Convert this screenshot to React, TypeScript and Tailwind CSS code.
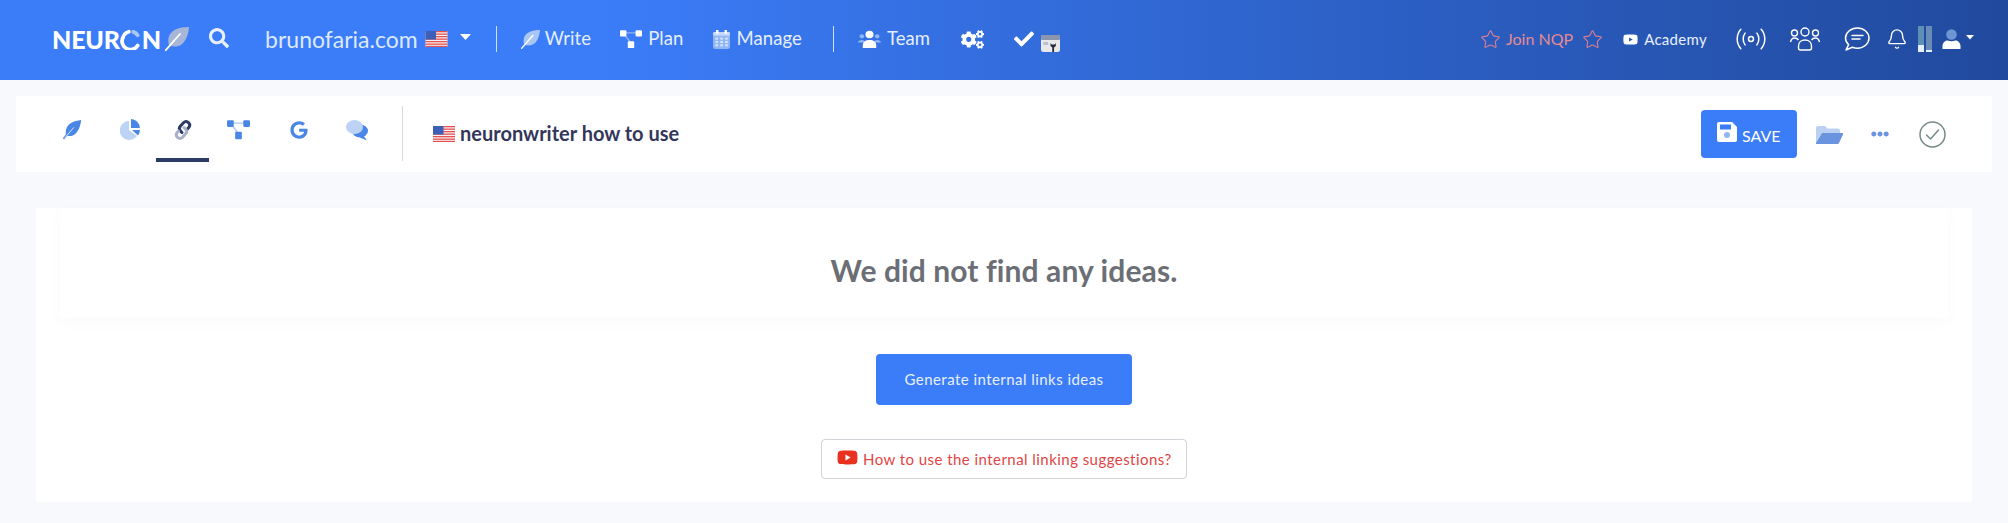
import React from "react";
import { FaSearch, FaCogs, FaCheck, FaYoutube } from "react-icons/fa";
import { FaGoogle, FaEllipsisH } from "react-icons/fa";
import { Bell, Star } from "lucide-react";

const Flag = ({ w = 22, h = 16 }: { w?: number; h?: number }) => (
  <svg width={w} height={h} viewBox="0 0 22 16" className="shrink-0">
    <rect width="22" height="16" fill="#f4f4f6" />
    {[0, 2.5, 5, 7.5, 10, 12.5, 14.8].map((y) => (
      <rect key={y} y={y} width="22" height="1.3" fill="#e8534f" />
    ))}
    <rect width="10.5" height="8.5" fill="#3e5fb8" />
  </svg>
);

const Feather = ({ size = 20, light = "#a9c6f6", quill = "#ffffff" }: { size?: number; light?: string; quill?: string }) => (
  <svg width={size} height={size} viewBox="0 0 24 24" className="shrink-0">
    <path d="M24 0C14 0 5 3 3.500 11c-.5 2.800-.2 5.400.6 7.400C8 20 13 20 16.500 17.500 21 14 23.500 7 24 0Z" fill={light} />
    <path d="M0.800 23.200 15 7" stroke={quill} strokeWidth="1.8" strokeLinecap="round" fill="none" />
  </svg>
);

const PlanIcon = ({ a, b, w = 22 }: { a: string; b: string; w?: number }) => (
  <svg width={w} height={w * 0.85} viewBox="0 0 24 20" className="shrink-0">
    <path d="M6 3h12M5 5l7 9" stroke={b} strokeWidth="1.4" fill="none" />
    <rect x="0" y="0" width="7" height="7" rx="1.2" fill={a} />
    <rect x="17" y="0" width="7" height="7" rx="1.2" fill={a} />
    <rect x="8.5" y="12" width="7" height="8" rx="1.2" fill={a} />
  </svg>
);

const Calendar = () => (
  <svg width="17" height="19" viewBox="0 0 14 20" preserveAspectRatio="none" className="shrink-0">
    <rect x="0" y="2" width="14" height="18" rx="2" fill="#8fb6f5" />
    <rect x="0" y="2" width="14" height="4" rx="1" fill="#c4d8fa" />
    <rect x="2.5" y="0" width="2" height="4" fill="#ffffff" />
    <rect x="9.5" y="0" width="2" height="4" fill="#ffffff" />
    {[8, 11.5, 15].map((y) => [2, 6, 10].map((x) => <rect key={`${x}-${y}`} x={x} y={y} width="2.2" height="2.2" fill="#d4e3fb" />))}
  </svg>
);

const TeamIcon = () => (
  <svg width="23" height="18" viewBox="0 0 24 20" preserveAspectRatio="none" className="shrink-0">
    <circle cx="4" cy="7" r="2.4" fill="#8fb6f5" />
    <circle cx="20" cy="7" r="2.4" fill="#8fb6f5" />
    <path d="M0 14c0-2 2-3 4-3s3 1 3 3ZM17 14c0-2 1-3 3-3s4 1 4 3Z" fill="#8fb6f5" />
    <circle cx="12" cy="5" r="4.2" fill="#fff" />
    <path d="M5 20v-3c0-4 3-6 7-6s7 2 7 6v3Z" fill="#fff" />
  </svg>
);

const Tool = () => (
  <svg width="19" height="18" viewBox="0 0 16 18" preserveAspectRatio="none" className="shrink-0">
    <rect x="0" y="1" width="16" height="17" rx="2" fill="#e8e8ea" />
    <rect x="0" y="1" width="16" height="5" rx="1" fill="#8a96ae" />
    <rect x="2" y="8" width="4" height="3" fill="#b9c0cc" />
    <path d="M8 9v3l1.5 1.5V18h1.5v-4.5L12.500 12V9l-1 1.500h-2.500Z" fill="#262c3c" />
  </svg>
);

const Broadcast = () => (
  <svg width="30" height="22" viewBox="0 0 28 20" fill="none" stroke="#fff" strokeWidth="1.4" strokeLinecap="round" className="shrink-0">
    <circle cx="14" cy="10" r="2.300" />
    <path d="M8.500 4.500c-2.400 3-2.400 8 0 11M19.500 4.500c2.400 3 2.400 8 0 11M4.500 1c-4.500 5-4.500 13 0 18M23.500 1c4.500 5 4.500 13 0 18" />
  </svg>
);

const People = () => (
  <svg width="32" height="24" viewBox="0 0 31 24" fill="none" stroke="#fff" strokeWidth="1.4" className="shrink-0">
    <circle cx="15.500" cy="5" r="4" />
    <circle cx="5" cy="6" r="3" />
    <circle cx="26" cy="6" r="3" />
    <path d="M9 21v-2c0-4 3-6 6.500-6s6.500 2 6.500 6v2a2 2 0 0 1-2 2H11a2 2 0 0 1-2-2Z" />
    <path d="M1 15c.6-2.500 2.500-4 4-4s3 .5 4 2M30 15c-.6-2.500-2.500-4-4-4s-3 .5-4 2" />
  </svg>
);

const ChatLines = () => (
  <svg width="26" height="24" viewBox="0 0 26 24" fill="none" stroke="#fff" strokeWidth="1.5" strokeLinecap="round" strokeLinejoin="round" className="shrink-0">
    <path d="M13.500 1C6.800 1 1.500 5.600 1.500 11c0 2.600 1.200 4.900 3.100 6.600L2 23l6.300-2.700c1.600.6 3.400.9 5.200.9 6.300 0 11.500-4.500 11.500-10.100S19.800 1 13.500 1Z" />
    <path d="M8 8.500h11M8 12h8" />
  </svg>
);

const UserIcon = () => (
  <svg width="19" height="20" viewBox="0 0 18 20" className="shrink-0">
    <circle cx="9" cy="5.500" r="5.300" fill="#6f94d6" />
    <path d="M0 20v-3c0-3.500 3-5.500 5-5.500 2.500 1 5.500 1 8 0 2 0 5 2 5 5.500v3Z" fill="#fff" />
  </svg>
);

const Caret = ({ w = 10 }: { w?: number }) => (
  <svg width={w} height={w * 0.55} viewBox="0 0 10 5.500" className="shrink-0">
    <path d="M0 0h10L5 5.500Z" fill="#fff" />
  </svg>
);

const Pie = () => (
  <svg width="20" height="22" viewBox="0 0 20 22" className="shrink-0">
    <path d="M9 2a9.500 9.500 0 1 0 8 15L9 11Z" fill="#bcd3f6" />
    <path d="M11 0a9 9 0 0 1 8.800 9H11Z" fill="#4a86e6" />
    <path d="M12 11h8a9 9 0 0 1-2 5.500Z" fill="#4a86e6" />
  </svg>
);

const LinkIcon = () => (
  <svg width="20" height="22" viewBox="0 0 20 22" fill="none" strokeWidth="3" strokeLinecap="round" className="shrink-0">
    <path d="M9 13.500 7.500 12c-1.500-1.500-1.300-3.500 0-5l3-3.300c1.500-1.500 3.700-1.500 5 0 1.500 1.400 1.500 3.300.3 4.700L14.500 10" stroke="#2c3a66" />
    <path d="M11 8.500l1.500 1.500c1.500 1.500 1.300 3.500 0 5l-3 3.300c-1.500 1.500-3.700 1.500-5 0-1.500-1.400-1.500-3.300-.3-4.700L5.500 12" stroke="#a9b1c6" />
  </svg>
);

const Chat = () => (
  <svg width="22" height="21" viewBox="0 0 22 21" className="shrink-0">
    <ellipse cx="14" cy="11" rx="8" ry="6.500" fill="#4a86e6" />
    <path d="M17 15l4 5.500-7-3Z" fill="#4a86e6" />
    <ellipse cx="8.500" cy="7" rx="8.500" ry="7" fill="#bcd3f6" />
  </svg>
);

const Save = () => (
  <svg width="20" height="20" viewBox="0 0 20 20" className="shrink-0">
    <path d="M2 0h13l5 5v13a2 2 0 0 1-2 2H2a2 2 0 0 1-2-2V2a2 2 0 0 1 2-2Z" fill="#fff" />
    <rect x="3" y="2.500" width="11" height="5" rx="0.600" fill="#3b7cf8" />
    <circle cx="10" cy="13" r="3" fill="#8fb6f5" />
  </svg>
);

const Folder = () => (
  <svg width="27" height="18" viewBox="0 0 27 18" className="shrink-0">
    <path d="M0 2a2 2 0 0 1 2-2h7l2.500 2.500H22a2 2 0 0 1 2 2V7H6L0 16Z" fill="#bcd0f2" />
    <path d="M6 7h20a1 1 0 0 1 1 1.400L23 17a2 2 0 0 1-2 1H1a1 1 0 0 1-1-1.400Z" fill="#6a93e0" />
  </svg>
);

const CheckRing = () => (
  <svg width="27" height="27" viewBox="0 0 27 27" fill="none" stroke="#748b88" strokeWidth="1.500" className="shrink-0">
    <circle cx="13.500" cy="13.500" r="12.500" />
    <path d="M7.500 14l4 4 8-9" strokeLinecap="round" strokeLinejoin="round" />
  </svg>
);

const Logo = () => (
  <div className="flex items-center">
    <span className="text-[25px] font-black leading-none tracking-[-0.2px] text-white">NEUR</span>
    <svg width="21" height="21" viewBox="0 0 19 19" className="mx-[0.5px] shrink-0" fill="none" strokeWidth="3.400" strokeLinecap="round">
      <path d="M3 7a7.500 7.500 0 0 0 13 8" stroke="#fff" />
      <path d="M4 5a7.500 7.500 0 0 1 4-2.500" stroke="#fff" />
      <path d="M12 2.600a7.500 7.500 0 0 1 4 3" stroke="#a9c6f6" />
    </svg>
    <span className="text-[25px] font-black leading-none text-white">N</span>
    <span className="ml-[4px]"><Feather size={24} light="#a7b5d6" /></span>
  </div>
);

const NavText = ({ children }: { children: React.ReactNode }) => (
  <span className="text-[18.500px] leading-none tracking-[0.1px] text-[#e4eefe]">{children}</span>
);

const Divider = ({ cls }: { cls: string }) => <div className={`h-[26px] w-px bg-[#cfe0fb] ${cls}`} />;

export default function App() {
  return (
    <div className="flex min-h-[523px] flex-col overflow-hidden bg-[#f8f9fc] font-['Lato','Noto_Sans',sans-serif]">
      <header className="flex h-20 shrink-0 items-center bg-gradient-to-r from-[#3b7cf8] from-[30%] to-[#214a9e] pl-[52px] pb-[2px]">
        <Logo />
        <FaSearch className="ml-[20px] mb-[3px] text-[20px] text-[#e8f0ff]" />
        <span className="ml-[36px] text-[23px] leading-none text-[#dce9ff]">brunofaria.com</span>
        <span className="ml-[7px]"><Flag w={23} h={16} /></span>
        <span className="ml-[12px] mb-[3px]"><Caret w={11} /></span>
        <Divider cls="ml-[25px]" />
        <span className="ml-[24px]"><Feather size={19} /></span>
        <span className="ml-[5px]"><NavText>Write</NavText></span>
        <span className="ml-[29px]"><PlanIcon a="#fff" b="#8fb6f5" /></span>
        <span className="ml-[6px]"><NavText>Plan</NavText></span>
        <span className="ml-[30px]"><Calendar /></span>
        <span className="ml-[6px]"><NavText>Manage</NavText></span>
        <Divider cls="ml-[31px]" />
        <span className="ml-[24px]"><TeamIcon /></span>
        <span className="ml-[6px]"><NavText>Team</NavText></span>
        <FaCogs className="ml-[31px] text-[23px] text-white" />
        <FaCheck className="ml-[30px] text-[20px] text-white" />
        <span className="ml-[7px] mt-[8px]"><Tool /></span>

        <div className="ml-auto flex items-center pr-[34px]">
          <Star size={21} strokeWidth={1.2} className="text-[#e07f8e]" />
          <span className="ml-[5px] text-[16px] leading-none text-[#e58a93]">Join NQP</span>
          <Star size={21} strokeWidth={1.2} className="ml-[9px] text-[#e07f8e]" />
          <FaYoutube className="ml-[20px] text-[15px] text-white" />
          <span className="ml-[6px] text-[15px] leading-none tracking-[0.3px] text-[#e8f0ff]">Academy</span>
          <span className="ml-[29px]"><Broadcast /></span>
          <span className="ml-[23px]"><People /></span>
          <span className="ml-[23px]"><ChatLines /></span>
          <Bell size={22} strokeWidth={1.5} className="ml-[16px] text-white" />
          <div className="ml-[10px] flex h-[26px] gap-[2px]">
            <div className="flex w-[6px] flex-col justify-end bg-[#5f8fb4]"><div className="h-[7px] bg-[#e4eefe]" /></div>
            <div className="flex w-[6px] flex-col justify-end bg-[#6a8db8]"><div className="h-[2px] bg-[#e4eefe]" /></div>
          </div>
          <span className="ml-[10px]"><UserIcon /></span>
          <span className="ml-[5px] mb-[3px]"><Caret w={8} /></span>
        </div>
      </header>

      <div className="mx-[16px] mt-[16px] flex h-[76px] items-center justify-between bg-white">
        <div className="flex h-full items-center">
          <div className="ml-[46px] flex h-full items-center pb-[8px]">
            <FeatherBlue />
            <span className="ml-[38px]"><Pie /></span>
          </div>
          <div className="relative ml-[33px] flex h-full w-[20px] items-center justify-center pb-[8px]">
            <LinkIcon />
            <div className="absolute bottom-[10px] left-[-17px] h-[4px] w-[53px] bg-[#2c3a66]" />
          </div>
          <div className="flex h-full items-center pb-[8px]">
            <span className="ml-[34px]"><PlanIcon a="#4a86e6" b="#a9c6f6" w={23} /></span>
            <FaGoogle className="ml-[40px] text-[18px] text-[#4a86e6]" />
            <span className="ml-[38px]"><Chat /></span>
          </div>
          <div className="ml-[34px] h-[55px] w-px bg-[#d9dade] mb-[2px]" />
          <span className="ml-[30px]"><Flag /></span>
          <span className="ml-[5px] mb-[2px] text-[20px] font-bold leading-none text-[#33365a]">neuronwriter how to use</span>
        </div>
        <div className="flex items-center pr-[46px]">
          <button className="flex h-[48px] w-[96px] items-center rounded-[4px] bg-[#3b7cf8] pl-[16px] pb-[4px] text-white">
            <Save />
            <span className="ml-[5px] mt-[7px] text-[16px] leading-none">SAVE</span>
          </button>
          <span className="ml-[19px] mt-[2px]"><Folder /></span>
          <FaEllipsisH className="ml-[28px] text-[18px] text-[#6a93e0]" />
          <span className="ml-[30px]"><CheckRing /></span>
        </div>
      </div>

      <main className="mx-[36px] mt-[36px] flex h-[294px] flex-col items-center bg-white">
        <div className="flex h-[110px] w-[calc(100%-48px)] items-center justify-center rounded-[4px] bg-white pt-[14px] shadow-[0_4px_14px_rgba(100,110,160,0.035)]">
          <h1 className="text-[30px] font-bold leading-none tracking-[0.1px] text-[#6b6e75]">We did not find any ideas.</h1>
        </div>
        <button className="mt-[37px] h-[51px] w-[256px] -translate-y-px rounded-[4px] bg-[#3b7cf8] text-[15px] tracking-[0.45px] text-[#e8f0ff]">Generate internal links ideas</button>
        <button className="mt-[33px] flex h-[40px] w-[366px] items-center rounded-[4px] border border-[#d2d2d8] bg-white pl-[15px]">
          <FaYoutube className="mb-[3px] text-[21px] text-[#e8321f]" />
          <span className="ml-[5px] text-[15px] tracking-[0.45px] text-[#e04545]">How to use the internal linking suggestions?</span>
        </button>
      </main>
    </div>
  );
}

function FeatherBlue() {
  return (
    <svg width="20" height="20" viewBox="0 0 24 24" className="shrink-0">
      <path d="M23 0C14 1 7 4 5 11c-.6 2.400-.5 4.600-.2 6.200L1 22l1.500 1.500 4-4.500c3 .6 6.500 0 9-2 4-3 6.500-9 7.500-17Z" fill="#4a86e6" />
      <path d="M3 22 14 9" stroke="#d6e4fb" strokeWidth="1.200" fill="none" />
    </svg>
  );
}
